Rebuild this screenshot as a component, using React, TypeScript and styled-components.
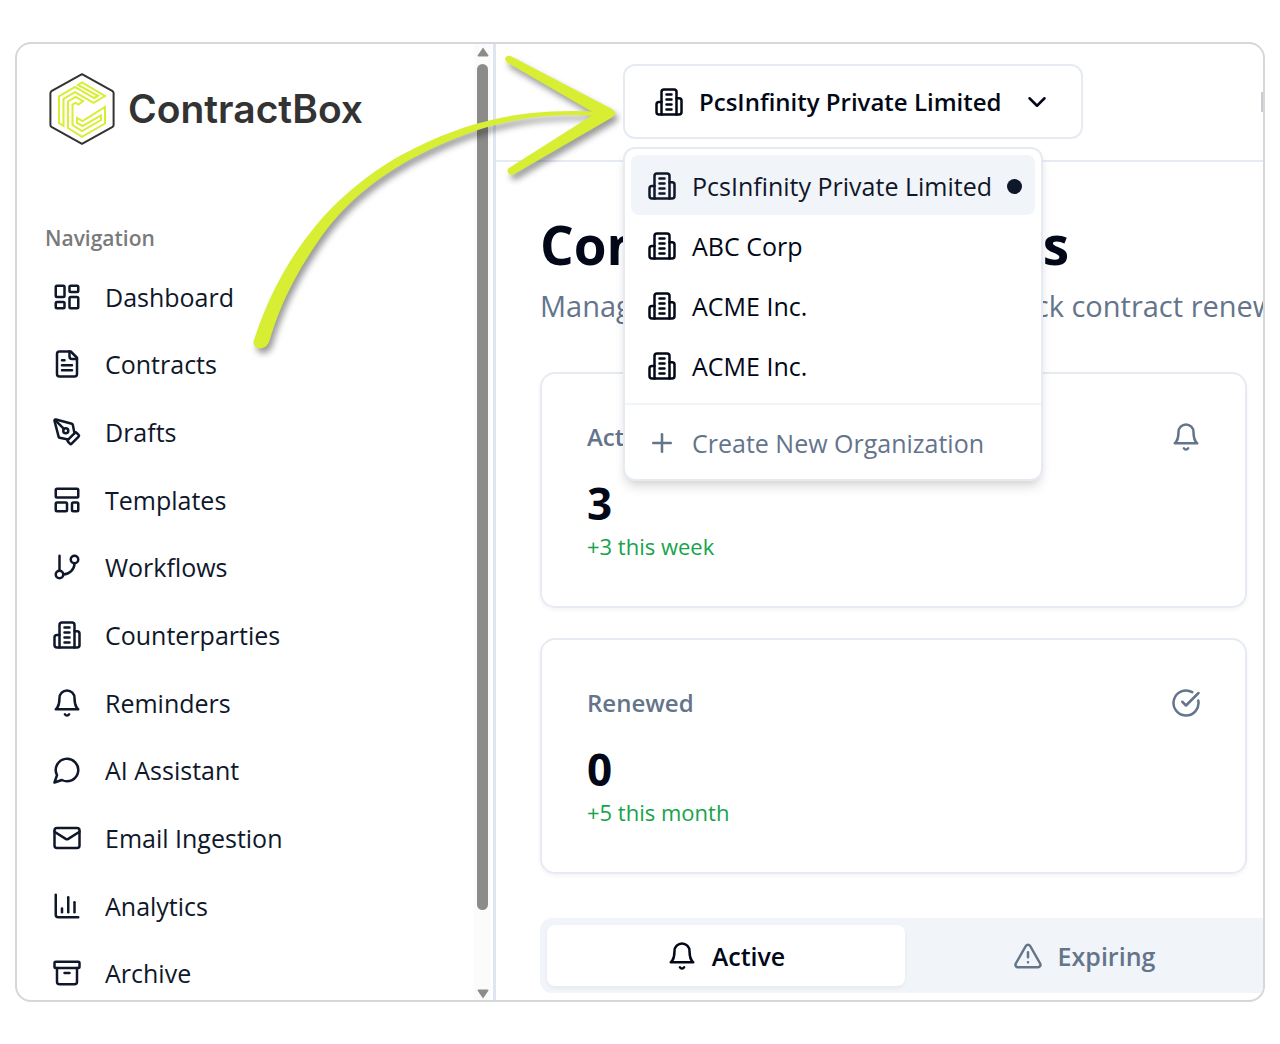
import React from "react";
import styled, { createGlobalStyle, css } from "styled-components";
import {
  Archive,
  ChartColumn,
  ChevronDown,
  GitBranch,
  LayoutDashboard,
  LayoutTemplate,
  PenTool,
  Plus,
} from "lucide-react";

const color = {
  ink: "#020817",
  nav: "#0f172a",
  muted: "#64748b",
  line: "#e6ebf3",
  divider: "#dfe6f1",
  soft: "#f1f4f9",
  green: "#16a34a",
  lime: "#d7ee33",
  logo: "#333333",
};

const GlobalStyle = createGlobalStyle`
  *, *::before, *::after { box-sizing: border-box; }
  body {
    margin: 0;
    background: #fff;
    color: ${color.ink};
    font-family: "Open Sans", "Noto Sans", "Segoe UI", sans-serif;
    font-size: 25px;
    line-height: 36px;
  }
  button { font: inherit; color: inherit; cursor: pointer; }
  h1, h2, p, ul { margin: 0; padding: 0; }
  ul { list-style: none; }
`;

/* ---------- icons ---------- */

const Glyph = styled.svg.attrs({ viewBox: "0 0 24 24", "aria-hidden": true })`
  width: 30px;
  height: 30px;
  flex: none;
  fill: none;
  stroke: currentColor;
  stroke-width: 2;
  stroke-linecap: round;
  stroke-linejoin: round;
`;

const BuildingIcon = () => (
  <Glyph>
    <path d="M6 22V4a2 2 0 0 1 2-2h8a2 2 0 0 1 2 2v18Z" />
    <path d="M6 12H4a2 2 0 0 0-2 2v6a2 2 0 0 0 2 2h2" />
    <path d="M18 9h2a2 2 0 0 1 2 2v9a2 2 0 0 1-2 2h-2" />
    <path d="M10 6h4M10 10h4M10 14h4M10 18h4" />
  </Glyph>
);

const BellIcon = () => (
  <Glyph>
    <path d="M6 8a6 6 0 0 1 12 0c0 7 3 9 3 9H3s3-2 3-9" />
    <path d="M10.3 21a1.94 1.94 0 0 0 3.4 0" />
  </Glyph>
);

const FileIcon = () => (
  <Glyph>
    <path d="M15 2H6a2 2 0 0 0-2 2v16a2 2 0 0 0 2 2h12a2 2 0 0 0 2-2V7Z" />
    <path d="M14 2v4a2 2 0 0 0 2 2h4" />
    <path d="M10 9H8M16 13H8M16 17H8" />
  </Glyph>
);

const ChatIcon = () => (
  <Glyph>
    <path d="M7.9 20A9 9 0 1 0 4 16.1L2 22Z" />
  </Glyph>
);

const MailIcon = () => (
  <Glyph>
    <rect width="20" height="16" x="2" y="4" rx="2" />
    <path d="m22 7-8.97 5.7a1.94 1.94 0 0 1-2.06 0L2 7" />
  </Glyph>
);

const CheckIcon = () => (
  <Glyph>
    <path d="M21.801 10A10 10 0 1 1 17 3.335" />
    <path d="m9 11 3 3L22 4" />
  </Glyph>
);

const WarningIcon = () => (
  <Glyph>
    <path d="m21.73 18-8-14a2 2 0 0 0-3.48 0l-8 14A2 2 0 0 0 4 21h16a2 2 0 0 0 1.73-3" />
    <path d="M12 9v4M12 17h.01" />
  </Glyph>
);

const LogoMark = () => (
  <svg width="66" height="72" viewBox="0 0 66 72" fill="none" aria-hidden="true">
    <path
      d="M33 1.2 63.6 18.2Q64.6 19 64.6 20V52Q64.6 53 63.6 53.8L33 70.8 2.4 53.8Q1.4 53 1.4 52V20Q1.4 19 2.4 18.2Z"
      stroke={color.logo}
      strokeWidth="2"
      strokeLinejoin="round"
    />
    <g stroke={color.lime} strokeWidth="2" strokeLinejoin="miter">
      <path d="M29 12 33 9.500 56 23 44.500 29.800 26 19.200 14.500 26V53L10 50V23.300L26 14 45 25 49 22.800Z" />
      <path d="M19 55V28.500L26.500 24 34 28.200 29.500 31.500 26.500 29.800 23.500 31.500V52L33 58 52 47V42.500L33.500 53 28 50V45L33.500 48.200 56 34V50.500L33 63.800Z" />
    </g>
  </svg>
);

/* ---------- shell ---------- */

const Window = styled.div`
  position: relative;
  display: flex;
  height: calc(100vh - 84px);
  margin: 42px 15px;
  border: 2px solid #d6d7d9;
  border-radius: 16px;
  overflow: hidden;
`;

const Sidebar = styled.aside`
  flex: none;
  display: flex;
  width: 479px;
  border-right: 3px solid ${color.divider};
`;

const SidebarBody = styled.div`
  flex: 1;
  min-width: 0;
  padding: 29px 28px 0;
`;

const Brand = styled.a`
  display: flex;
  align-items: center;
  gap: 13px;
  margin-left: 4px;
  color: ${color.logo};
  font-family: Inter, "Liberation Sans", sans-serif;
  font-size: 39px;
  font-weight: 600;
  line-height: 72px;
  text-decoration: none;
`;

const NavTitle = styled.h2`
  margin-top: 75px;
  color: #7a7a7c;
  font-size: 21px;
  font-weight: 600;
  line-height: 36px;
`;

const NavList = styled.ul`
  display: grid;
  grid-auto-rows: 1fr;
  height: 744px;
  margin-top: 7px;
`;

const NavLink = styled.a`
  display: flex;
  align-items: center;
  gap: 23px;
  height: 100%;
  padding-left: 7px;
  color: ${color.nav};
  text-decoration: none;
`;

const ScrollTrack = styled.div`
  display: flex;
  flex-direction: column;
  align-items: center;
  width: 17px;
  margin-right: 2px;
  padding: 3px 0 1px;
  background: #fbfbfb;
`;

const ScrollThumb = styled.div`
  flex: none;
  width: 11px;
  height: calc(100% - 106px);
  margin-top: 7px;
  border-radius: 6px;
  background: #8b8b8b;
`;

const ScrollArrow = styled.svg.attrs({ viewBox: "0 0 12 10", "aria-hidden": true })<{ $down?: boolean }>`
  flex: none;
  width: 12px;
  height: 10px;
  fill: #8b8b8b;
  ${(p) => p.$down && css`margin-top: auto; transform: rotate(180deg);`}
`;

const Main = styled.main`
  flex: 1;
  min-width: 0;
`;

/* ---------- header and organization menu ---------- */

const Header = styled.header`
  display: flex;
  align-items: flex-start;
  height: 118px;
  padding: 20px 0 0 127px;
  border-bottom: 2px solid ${color.line};
`;

const Switcher = styled.div`
  position: relative;
`;

const Trigger = styled.button`
  display: flex;
  align-items: center;
  width: 460px;
  height: 75px;
  padding: 0 29px;
  border: 2px solid ${color.line};
  border-radius: 12px;
  background: #fff;
  font-size: 24px;
  font-weight: 600;
  white-space: nowrap;

  span { margin: 0 auto 0 15px; }
`;

const Menu = styled.div`
  position: absolute;
  top: 83px;
  left: 0;
  z-index: 2;
  width: 420px;
  padding: 6px 6px 7px;
  border: 2px solid ${color.line};
  border-radius: 12px;
  background: #fff;
  box-shadow: 0 8px 12px -2px rgba(0, 0, 0, 0.12), 0 4px 8px -4px rgba(0, 0, 0, 0.1);
`;

const MenuItem = styled.button<{ $active?: boolean; $muted?: boolean }>`
  display: flex;
  align-items: center;
  gap: 15px;
  width: 100%;
  height: 60px;
  padding: 2px 14px 0 16px;
  border: 0;
  border-radius: 8px;
  background: ${(p) => (p.$active ? color.soft : "transparent")};
  color: ${(p) => (p.$muted ? color.muted : p.$active ? color.nav : color.ink)};
  text-align: left;
  white-space: nowrap;
`;

const Dot = styled.i`
  flex: none;
  width: 15px;
  height: 15px;
  margin-left: auto;
  border-radius: 50%;
  background: ${color.nav};
`;

const MenuRule = styled.hr`
  height: 2px;
  margin: 8px -6px 7px;
  border: 0;
  background: ${color.soft};
`;

/* ---------- content ---------- */

const Content = styled.div`
  padding: 53px 16px 0 44px;
`;

const Title = styled.h1`
  font-size: 53px;
  font-weight: 700;
  line-height: 60px;
  white-space: nowrap;
`;

const Lead = styled.p`
  margin-top: 10px;
  color: ${color.muted};
  font-size: 29px;
  line-height: 42px;
  white-space: nowrap;
`;

const Cards = styled.div`
  display: grid;
  gap: 30px;
  margin-top: 45px;
`;

const Card = styled.section`
  height: 236px;
  padding: 45px 44px 0 45px;
  border: 2px solid ${color.line};
  border-radius: 15px;
  box-shadow: 0 2px 4px rgba(0, 0, 0, 0.05);
`;

const CardHead = styled.div`
  display: flex;
  align-items: center;
  justify-content: space-between;
  color: ${color.muted};
`;

const CardTitle = styled.h2`
  font-size: 24px;
  font-weight: 600;
  line-height: 36px;
`;

const Figure = styled.p`
  margin-top: 19px;
  font-size: 44px;
  font-weight: 700;
  line-height: 58px;
`;

const Trend = styled.p`
  color: ${color.green};
  font-size: 22px;
  line-height: 28px;
`;

const Tabs = styled.div`
  display: grid;
  grid-template-columns: repeat(2, 358px);
  width: 840px;
  margin-top: 44px;
  padding: 7px;
  border-radius: 12px;
  background: ${color.soft};
`;

const Tab = styled.button<{ $active?: boolean }>`
  display: flex;
  align-items: center;
  justify-content: center;
  gap: 15px;
  height: 61px;
  padding: 1px 6px 0;
  border: 0;
  border-radius: 8px;
  background: ${(p) => (p.$active ? "#fff" : "transparent")};
  color: ${(p) => (p.$active ? color.ink : color.muted)};
  box-shadow: ${(p) => (p.$active ? "0 2px 4px rgba(0, 0, 0, 0.05)" : "none")};
  font-weight: 600;
`;

const Pointer = styled.svg.attrs({ viewBox: "0 0 380 310", "aria-hidden": true })`
  position: absolute;
  top: 6px;
  left: 233px;
  z-index: 3;
  width: 380px;
  height: 310px;
  fill: ${color.lime};
  filter: drop-shadow(3px 5px 3px rgba(0, 0, 0, 0.4));
  pointer-events: none;
`;

const EdgeMark = styled.div`
  width: 2px;
  height: 20px;
  margin: 28px 0 0 auto;
  background: #c9cbce;
`;

const navItems = [
  { label: "Dashboard", icon: <LayoutDashboard size={30} /> },
  { label: "Contracts", icon: <FileIcon /> },
  { label: "Drafts", icon: <PenTool size={30} /> },
  { label: "Templates", icon: <LayoutTemplate size={30} /> },
  { label: "Workflows", icon: <GitBranch size={30} /> },
  { label: "Counterparties", icon: <BuildingIcon /> },
  { label: "Reminders", icon: <BellIcon /> },
  { label: "AI Assistant", icon: <ChatIcon /> },
  { label: "Email Ingestion", icon: <MailIcon /> },
  { label: "Analytics", icon: <ChartColumn size={30} /> },
  { label: "Archive", icon: <Archive size={30} /> },
];

const organizations = ["PcsInfinity Private Limited", "ABC Corp", "ACME Inc.", "ACME Inc."];

const stats = [
  { title: "Active", value: "3", trend: "+3 this week", icon: <BellIcon /> },
  { title: "Renewed", value: "0", trend: "+5 this month", icon: <CheckIcon /> },
];

export default function App() {
  return (
    <>
      <GlobalStyle />
      <Window>
        <Sidebar>
          <SidebarBody>
            <Brand href="#">
              <LogoMark />
              ContractBox
            </Brand>
            <NavTitle>Navigation</NavTitle>
            <nav>
              <NavList>
                {navItems.map((item) => (
                  <li key={item.label}>
                    <NavLink href="#">
                      {item.icon}
                      {item.label}
                    </NavLink>
                  </li>
                ))}
              </NavList>
            </nav>
          </SidebarBody>
          <ScrollTrack>
            <ScrollArrow>
              <path d="M6 0.500 11.500 8.500Q11.500 9.500 10.500 9.500H1.500Q0.500 9.500 0.500 8.500Z" />
            </ScrollArrow>
            <ScrollThumb />
            <ScrollArrow $down>
              <path d="M6 0.500 11.500 8.500Q11.500 9.500 10.500 9.500H1.500Q0.500 9.500 0.500 8.500Z" />
            </ScrollArrow>
          </ScrollTrack>
        </Sidebar>

        <Main>
          <Header>
            <Switcher>
              <Trigger type="button" aria-haspopup="menu" aria-expanded="true">
                <BuildingIcon />
                <span>PcsInfinity Private Limited</span>
                <ChevronDown size={30} />
              </Trigger>
              <Menu role="menu">
                {organizations.map((name, i) => (
                  <MenuItem key={i} type="button" role="menuitem" $active={i === 0}>
                    <BuildingIcon />
                    {name}
                    {i === 0 && <Dot />}
                  </MenuItem>
                ))}
                <MenuRule />
                <MenuItem type="button" role="menuitem" $muted>
                  <Plus size={30} />
                  Create New Organization
                </MenuItem>
              </Menu>
            </Switcher>
            <EdgeMark />
          </Header>

          <Content>
            <Title>Contract Reminders</Title>
            <Lead>Manage all your notifications and track contract renewals</Lead>
            <Cards>
              {stats.map((s) => (
                <Card key={s.title}>
                  <CardHead>
                    <CardTitle>{s.title}</CardTitle>
                    {s.icon}
                  </CardHead>
                  <Figure>{s.value}</Figure>
                  <Trend>{s.trend}</Trend>
                </Card>
              ))}
            </Cards>
            <Tabs role="tablist">
              <Tab type="button" role="tab" aria-selected="true" $active>
                <BellIcon />
                Active
              </Tab>
              <Tab type="button" role="tab" aria-selected="false">
                <WarningIcon />
                Expiring
              </Tab>
            </Tabs>
          </Content>
        </Main>

        <Pointer>
          <path d="M4 290C17 250 35 215 60 183C87 148 125 117 167 97C220 71 275 57 352 62L345 66C280 61 225 76 167 106C128 126 92 155 67 193C45 225 30 255 19 292C15 302 1 299 4 290Z" />
          <path d="M261 6.200 361 58.500Q369 63 362 67.500L264 124.300Q258 126 257.500 120.500Q257.500 119 259 118L345 63.500 257 12.500Q254 9 256 7Q258 5 261 6.200Z" />
        </Pointer>
      </Window>
    </>
  );
}
